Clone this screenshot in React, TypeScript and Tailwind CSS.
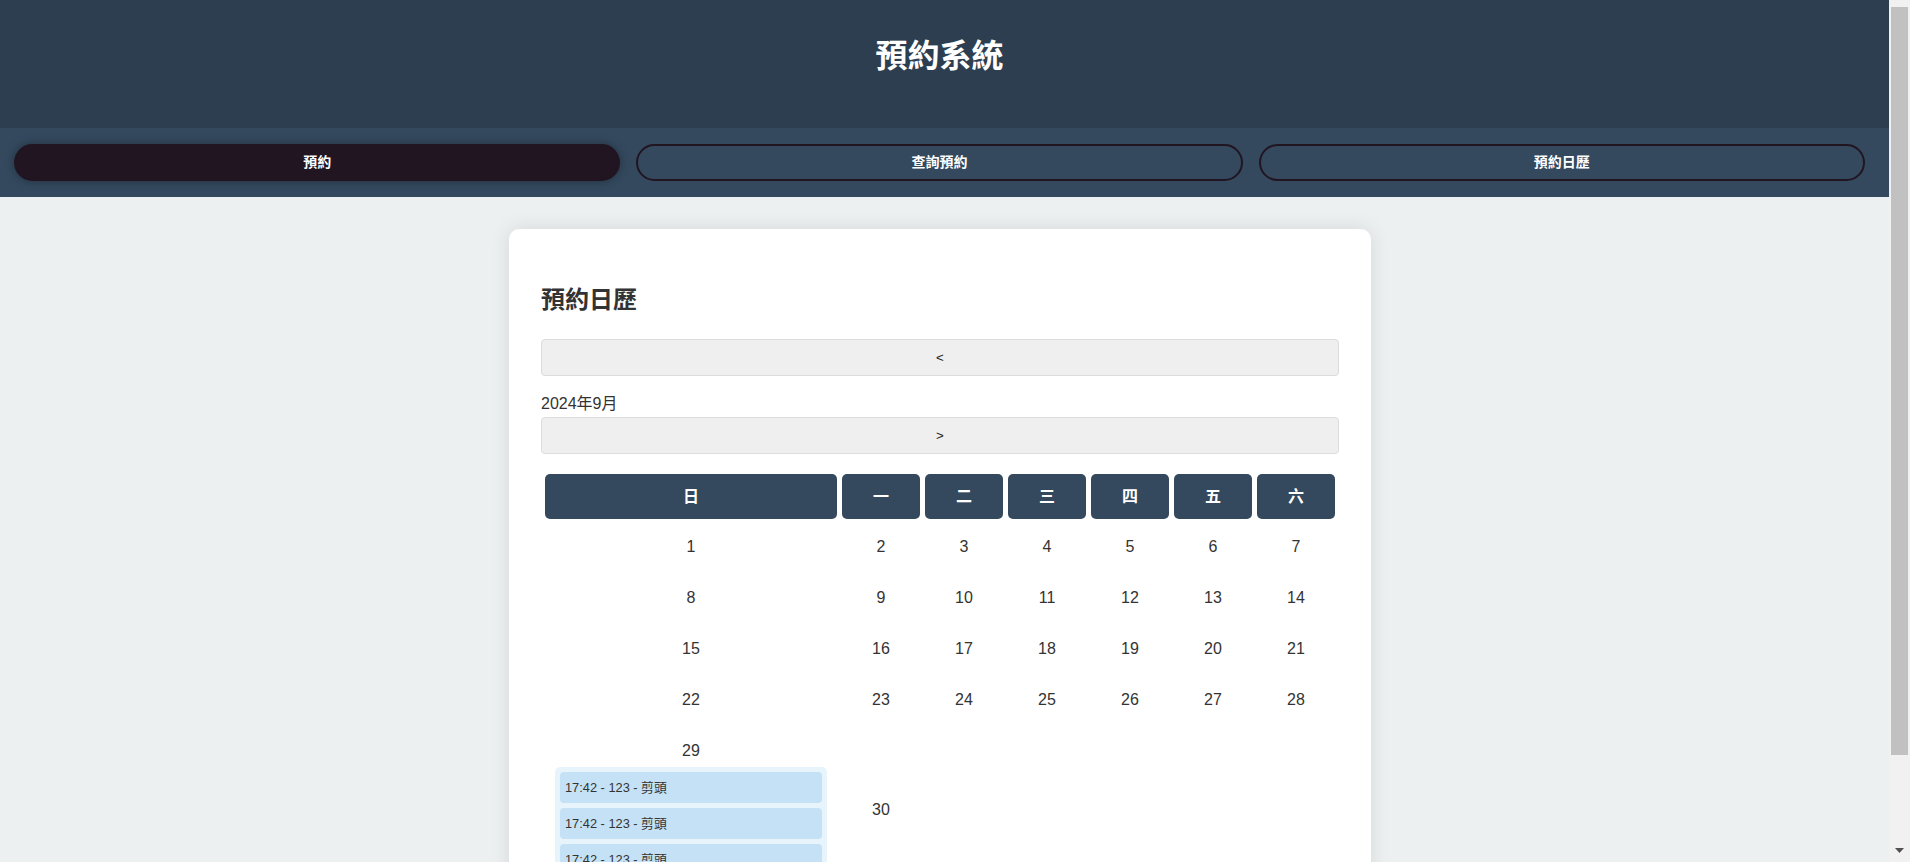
import React from "react";

const weekdays = ["日", "一", "二", "三", "四", "五", "六"];
const weeks: number[][] = [
  [1, 2, 3, 4, 5, 6, 7],
  [8, 9, 10, 11, 12, 13, 14],
  [15, 16, 17, 18, 19, 20, 21],
  [22, 23, 24, 25, 26, 27, 28],
];

const events = ["17:42 - 123 - 剪頭", "17:42 - 123 - 剪頭", "17:42 - 123 - 剪頭"];

export default function App() {
  return (
    <div className="flex h-[862px] overflow-hidden bg-[#ecf0f1] font-['Liberation_Sans','Noto_Sans_CJK_TC',sans-serif] text-[#333]">
      <div className="min-w-0 flex-1 overflow-hidden">
        <header className="h-[128px] bg-[#2c3e50] pt-[36px] pr-[10px] text-center">
          <h1 className="text-[32px] font-bold leading-[40px] text-white">預約系統</h1>
        </header>
        <nav className="flex gap-[16px] bg-[#34495e] pl-[14px] pr-[24px] pt-[16px] pb-[16px]">
          <button className="h-[37px] flex-1 rounded-full border-2 border-[#211522] bg-[#211522] text-[14px] font-bold text-white shadow-[0_0_10px_rgba(0,0,0,0.35)]">
            預約
          </button>
          <button className="h-[37px] flex-1 rounded-full border-2 border-[#211522] bg-[#34495e] text-[14px] font-bold text-white">
            查詢預約
          </button>
          <button className="h-[37px] flex-1 rounded-full border-2 border-[#211522] bg-[#34495e] text-[14px] font-bold text-white">
            預約日歷
          </button>
        </nav>
        <main className="pt-[32px] pb-[32px] pr-[9px]">
          <div className="mx-auto w-[862px] rounded-[10px] bg-white p-[32px] shadow-[0_0_20px_rgba(0,0,0,0.1)]">
            <h2 className="mt-[20px] mb-[20px] text-[24px] font-bold leading-[38px] text-[#333]">預約日歷</h2>
            <button className="block h-[37px] w-full rounded-[4px] border border-[#dcdcdc] bg-[#efefef] text-[13.33px] text-[#222]">
              &lt;
            </button>
            <div className="mt-[16px] text-[16px] leading-[24px] text-[#333]">2024年9月</div>
            <button className="mt-[1px] block h-[37px] w-full rounded-[4px] border border-[#dcdcdc] bg-[#efefef] text-[13.33px] text-[#222]">
              &gt;
            </button>
            <div className="mt-[20px] grid grid-cols-[292px_repeat(6,78px)] gap-[5px] px-[4px]">
              {weekdays.map((d) => (
                <div
                  key={d}
                  className="flex h-[45px] items-center justify-center rounded-[5px] bg-[#34495e] text-[16px] font-bold text-white"
                >
                  {d}
                </div>
              ))}
              {weeks.map((w) =>
                w.map((n) => (
                  <div key={n} className="flex h-[46px] items-center justify-center text-[16px] text-[#333]">
                    {n}
                  </div>
                ))
              )}
              <div className="px-[10px] pt-[12px] pb-[12px]">
                <div className="text-center text-[16px] leading-[22px] text-[#333]">29</div>
                <div className="mt-[5px] flex flex-col gap-[5px] rounded-[5px] bg-[#e8f4fc] p-[5px]">
                  {events.map((e, i) => (
                    <div
                      key={i}
                      className="rounded-[4px] bg-[#c5e1f5] px-[5px] py-[5px] text-[12.8px] leading-[21px] text-[#333]"
                    >
                      {e}
                    </div>
                  ))}
                </div>
              </div>
              <div className="flex items-center justify-center text-[16px] text-[#333]">30</div>
              <div />
              <div />
              <div />
              <div />
              <div />
            </div>
          </div>
        </main>
      </div>
      <div className="flex w-[21px] shrink-0 flex-col bg-[#f1f1f1]">
        <div className="mx-[2px] mt-[7px] h-[748px] bg-[#c1c1c1]" />
        <div className="flex-1" />
        <div className="flex h-[17px] items-start justify-center pt-[3px]">
          <svg width="9" height="5" viewBox="0 0 9 5">
            <polygon points="0,0 9,0 4.5,5" fill="#505050" />
          </svg>
        </div>
      </div>
    </div>
  );
}
